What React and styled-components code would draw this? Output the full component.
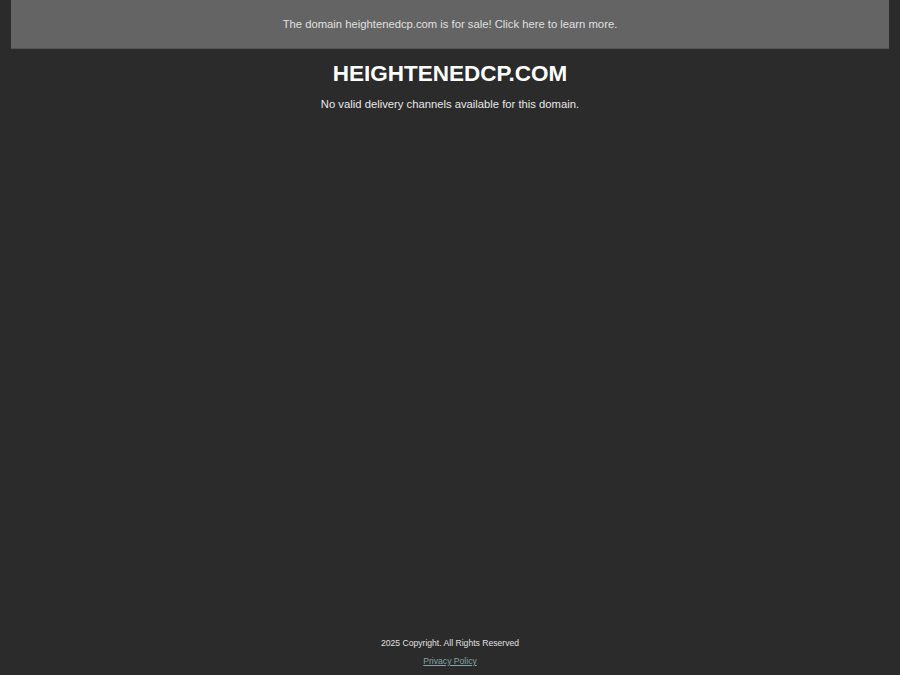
import React from 'react'
import styled, { createGlobalStyle } from 'styled-components'

const GlobalStyle = createGlobalStyle`
    html, body {
        margin: 0;
        padding: 0;
        background: #2b2b2b;
        font-family: "Liberation Sans", Arial, sans-serif;
    }
`

function App() {
  return (
      <Page>
          <GlobalStyle />
          <Banner>
              <BannerLink href="#">The domain heightenedcp.com is for sale! Click here to learn more.</BannerLink>
          </Banner>
          <Main>
              <Title>HEIGHTENEDCP.COM</Title>
              <Message>No valid delivery channels available for this domain.</Message>
          </Main>
          <Footer>
              <Copyright>2025 Copyright. All Rights Reserved</Copyright>
              <PolicyLink href="#">Privacy Policy</PolicyLink>
          </Footer>
      </Page>
  )
}

const Page = styled.div`
    min-height: 100vh;
    display: flex;
    flex-direction: column;
    box-sizing: border-box;
`
const Banner = styled.div`
    margin: 0 11px;
    height: 48px;
    background-color: #646464;
    border-bottom: 1px solid #555;
    display: flex;
    justify-content: center;
    align-items: center;
`
const BannerLink = styled.a`
    color: #e0e0e0;
    font-size: 11.25px;
    line-height: 14px;
    text-decoration: none;
`
const Main = styled.div`
    flex: 1;
    text-align: center;
    padding-top: 11px;
`
const Title = styled.h1`
    margin: 0;
    color: #fff;
    font-size: 22.5px;
    font-weight: bold;
    line-height: 28px;
`
const Message = styled.p`
    margin: 9px 0 0;
    color: #e8e8e8;
    font-size: 11.25px;
    line-height: 14px;
`
const Footer = styled.div`
    display: flex;
    flex-direction: column;
    align-items: center;
    padding-bottom: 8px;
`
const Copyright = styled.div`
    color: #e0e0e0;
    font-size: 8.6px;
    line-height: 11px;
`
const PolicyLink = styled.a`
    margin-top: 7px;
    color: #82a4a5;
    font-size: 8.6px;
    line-height: 11px;
    text-decoration: underline;
`
export default App
